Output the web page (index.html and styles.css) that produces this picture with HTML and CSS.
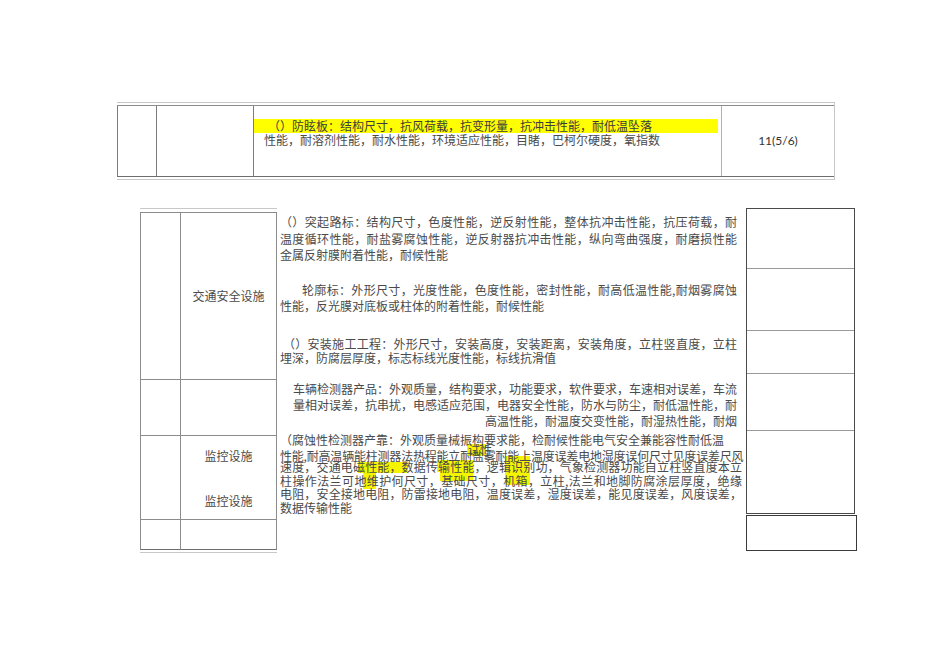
FILE: index.html
```html
<!DOCTYPE html>
<html lang="zh-CN">
<head>
<meta charset="utf-8">
<title>检测项目表</title>
<link rel="stylesheet" href="styles.css">
</head>
<body>
<div class="page">
  <div class="top-wrap">
    <div class="top-table">
      <div class="cell c1"></div>
      <div class="cell c2"></div>
      <div class="cell c3">
        <div class="hl-line">（）防眩板：结构尺寸，抗风荷载，抗变形量，抗冲击性能，耐低温坠落</div>
        <div class="plain-line">性能，耐溶剂性能，耐水性能，环境适应性能，目睹，巴柯尔硬度，氧指数</div>
      </div>
      <div class="cell c4">11(5/6)</div>
    </div>
  </div>

  <div class="lower">
    <div class="left-wrap">
      <div class="left-table">
        <div class="lc a r1"></div>
        <div class="lc b r1 center">交通安全设施</div>
        <div class="lc a r2"></div>
        <div class="lc b r2"></div>
        <div class="lc a r3"></div>
        <div class="lc b r3 stack"><span>监控设施</span><span class="second">监控设施</span></div>
        <div class="lc a r4"></div>
        <div class="lc b r4"></div>
      </div>
    </div>

    <div class="textcol">
      <div class="hl hl-a"></div>
      <div class="hl hl-a2"></div>
      <div class="hl hl-b"></div>
      <div class="hl hl-c"></div>
      <div class="hl hl-d"></div>
      <div class="hl hl-e"></div>
      <span class="ghost">试性</span>

      <div class="para p1">
        <div class="j">（）突起路标：结构尺寸，色度性能，逆反射性能，整体抗冲击性能，抗压荷载，耐</div>
        <div class="j">温度循环性能，耐盐雾腐蚀性能，逆反射器抗冲击性能，纵向弯曲强度，耐磨损性能</div>
        <div>金属反射膜附着性能，耐候性能</div>
      </div>
      <div class="para p2">
        <div class="j ind2">轮廓标：外形尺寸，光度性能，色度性能，密封性能，耐高低温性能,耐烟雾腐蚀</div>
        <div>性能，反光膜对底板或柱体的附着性能，耐候性能</div>
      </div>
      <div class="para p3">
        <div class="j ind3">（）安装施工工程：外形尺寸，安装高度，安装距离，安装角度，立柱竖直度，立柱</div>
        <div>埋深，防腐层厚度，标志标线光度性能，标线抗滑值</div>
      </div>
      <div class="para p4">
        <div class="j ind4">车辆检测器产品：外观质量，结构要求，功能要求，软件要求，车速相对误差，车流</div>
        <div class="j ind4">量相对误差，抗串扰，电感适应范围，电器安全性能，防水与防尘，耐低温性能，耐</div>
        <div class="right">高温性能，耐温度交变性能，耐湿热性能，耐烟</div>
      </div>
      <div class="para p5">
        <div class="l1">（腐蚀性检测器产靠：外观质量械振构要求能，检耐候性能电气安全兼能容性耐低温</div>
        <div class="l2">性能,耐高温辆能柱测器法热程能立耐盐雾耐能上温度误差电地湿度误何尺寸见度误差尺风</div>
        <div class="ln j">速度，交通电磁性能，数据传输性能，逻辑识别功，气象检测器功能自立柱竖直度本立</div>
        <div class="ln j">柱操作法兰可地维护何尺寸，基础尺寸，机箱，立柱,法兰和地脚防腐涂层厚度，绝缘</div>
        <div class="ln j">电阻，安全接地电阻，防雷接地电阻，温度误差，湿度误差，能见度误差，风度误差，</div>
        <div class="ln">数据传输性能</div>
      </div>
    </div>

    <div class="right-col">
      <div class="right-table">
        <div class="rc h1"></div>
        <div class="rc h2"></div>
        <div class="rc h3"></div>
        <div class="rc h4"></div>
        <div class="rc h5"></div>
      </div>
      <div class="right-box"></div>
    </div>
  </div>
</div>
</body>
</html>
```

FILE: styles.css
```css
html, body {
  margin: 0;
  padding: 0;
  background: #ffffff;
}

body {
  font-family: "Noto Sans CJK SC", "Noto Sans", sans-serif;
  font-size: 12px;
  color: #4a4a4a;
}

.page {
  width: 950px;
  height: 672px;
  overflow: hidden;
}

/* ---------- top table ---------- */
.top-wrap {
  margin: 102px 0 0 117px;
  width: 718px;
  border-top: 1px solid #c8c8c8;
  border-bottom: 1px solid #c8c8c8;
  border-right: 1px solid #c8c8c8;
  padding: 2px 0;
  box-sizing: border-box;
  height: 78px;
}

.top-table {
  display: grid;
  grid-template-columns: 39px 97px 468px 113px;
  height: 72px;
  box-sizing: border-box;
  border-top: 1px solid #8c8c8c;
  border-bottom: 1px solid #6e6e6e;
}

.cell {
  border-left: 1px solid #7c7c7c;
  box-sizing: border-box;
}

.c3 {
  padding-top: 13px;
  line-height: 14px;
}

.hl-line {
  background: #ffff00;
  margin-right: 3px;
  padding-left: 14px;
  color: #3c3c3c;
}

.plain-line {
  padding-left: 10px;
}

.c4 {
  border-left: 1px solid #b0b0b0;
  font-family: "Lato", "Liberation Sans", sans-serif;
  font-size: 12px;
  color: #333;
  text-align: center;
  padding-top: 28px;
  line-height: 14px;
}

/* ---------- lower area ---------- */
.lower {
  display: flex;
  align-items: flex-start;
  margin-top: 28px;
}

.left-wrap {
  margin-left: 140px;
  width: 137px;
  border-top: 1px solid #c8c8c8;
  border-bottom: 1px solid #c8c8c8;
  padding: 3px 0 2px;
}

.left-table {
  display: grid;
  grid-template-columns: 41px 96px;
  grid-template-rows: 167px 56px 84px 30px;
  border-top: 1px solid #8c8c8c;
}

.lc {
  box-sizing: border-box;
  border-bottom: 1px solid #8c8c8c;
  border-right: 1px solid #8c8c8c;
}

.lc.a {
  border-left: 1px solid #8c8c8c;
}

.lc.r4 {
  border-bottom-color: #6e6e6e;
}

.center {
  display: flex;
  align-items: center;
  justify-content: center;
  padding-bottom: 1px;
}

.stack {
  display: flex;
  flex-direction: column;
  align-items: center;
  padding-top: 13px;
  line-height: 14px;
}

.stack .second {
  margin-top: 31px;
}

/* ---------- text column ---------- */
.textcol {
  position: relative;
  z-index: 0;
  width: 462px;
  margin-left: 3px;
}

.hl {
  position: absolute;
  z-index: -1;
  background: #f5f500;
}

.hl-a { left: 78px; top: 254px; width: 50px; height: 11px; }
.hl-a2 { left: 83px; top: 262px; width: 13px; height: 19px; }
.hl-b { left: 187px; top: 236px; width: 19px; height: 12px; }
.hl-c { left: 157px; top: 252px; width: 36px; height: 12px; }
.hl-d { left: 160px; top: 263px; width: 33px; height: 10px; }
.hl-e { left: 225px; top: 248px; width: 25px; height: 29px; }

.ghost {
  position: absolute;
  left: 188px;
  top: 236px;
  line-height: 12px;
  font-size: 12px;
}

.para .j {
  text-align: justify;
  text-align-last: justify;
  margin-right: 5px;
}

.p1 {
  margin-top: 6px;
  line-height: 16.5px;
}

.p2 {
  margin-top: 18.5px;
  line-height: 16px;
}

.ind2 { padding-left: 22px; }

.p3 {
  margin-top: 23px;
  line-height: 14px;
}

.ind3 { padding-left: 3px; }

.p4 {
  margin-top: 16px;
  line-height: 16px;
}

.ind4 { padding-left: 13px; }

.right {
  text-align: right;
  margin-right: 5px;
}

.p5 {
  margin-top: 3px;
}

.p5 .l1 {
  line-height: 16px;
}

.p5 .l2 {
  height: 12px;
  line-height: 16px;
  white-space: nowrap;
  letter-spacing: -0.2px;
}

.p5 .ln {
  line-height: 13.7px;
}

.p5 .ln.j {
  margin-right: 0;
}

/* ---------- right table ---------- */
.right-col {
  margin-left: 4px;
  width: 111px;
}

.right-table {
  width: 109px;
  box-sizing: border-box;
  border: 1px solid #4a4a4a;
  border-bottom: none;
}

.rc {
  box-sizing: border-box;
  border-bottom: 1px solid #9a9a9a;
}

.rc.h5 { border-bottom-color: #4a4a4a; }

.h1 { height: 60px; }
.h2 { height: 62px; }
.h3 { height: 43px; }
.h4 { height: 57px; }
.h5 { height: 83px; }

.right-box {
  margin-top: 1px;
  width: 111px;
  height: 36px;
  box-sizing: border-box;
  border: 1px solid #3a3a3a;
}
```
